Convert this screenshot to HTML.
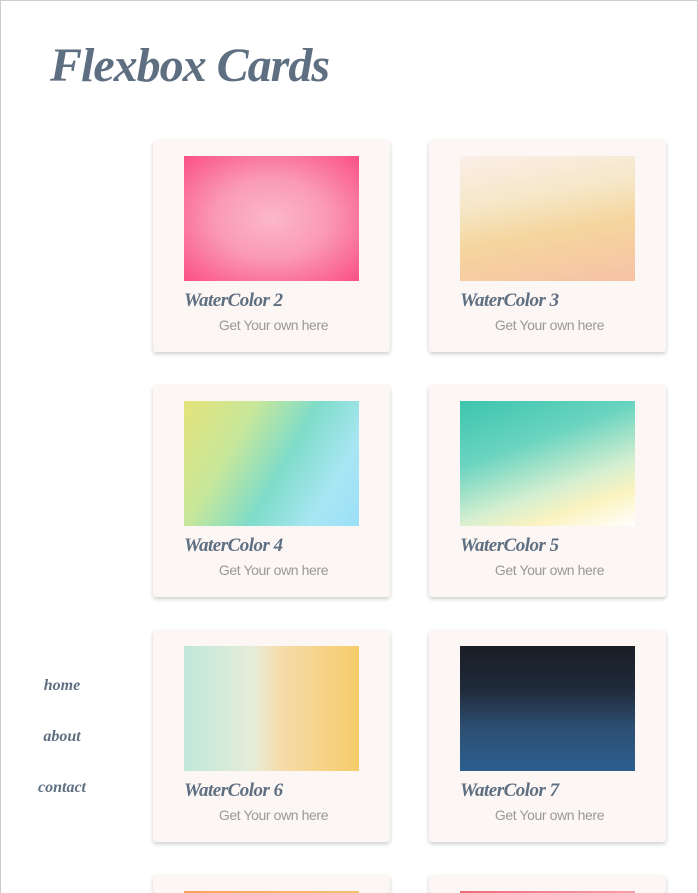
<!DOCTYPE html>
<html style="width:698px;height:893px;overflow:hidden"><head><style>
body{margin:0;width:698px;height:893px;overflow:hidden;background:#fff;font-family:"Liberation Serif",serif;position:relative}
.frame{position:absolute;left:0;top:0;width:696px;height:900px;border:1px solid #ccc;border-bottom:none}
h1{position:absolute;left:50px;top:38px;margin:0;font-size:48px;font-style:italic;font-weight:bold;color:#5f6f82;letter-spacing:-1px}
.nav{position:absolute;left:0;width:124px;text-align:center;font-style:italic;font-weight:bold;color:#5f6f82;font-size:16px}
.card{position:absolute;width:237px;height:212px;background:#fcf7f4;border-radius:3px;box-shadow:0 2px 4px rgba(0,0,0,.2)}
.img{position:absolute;left:31px;top:16px;width:175px;height:125px}
.t{position:absolute;left:31px;top:150px;font-size:19px;font-style:italic;font-weight:bold;color:#5f6f82;letter-spacing:-.5px}
.s{position:absolute;left:0;width:237px;top:177px;text-align:center;font-family:"Liberation Sans",sans-serif;font-size:14px;letter-spacing:-0.4px;color:#999;padding-left:2px}
</style></head><body>
<div class="frame"></div>
<h1>Flexbox Cards</h1>
<div class="nav" style="top:677px">home</div>
<div class="nav" style="top:728px">about</div>
<div class="nav" style="top:779px">contact</div>

<div class="card" style="left:153px;top:140px"><div class="img" style="background:radial-gradient(ellipse at 50% 50%,#fbb7cc 0%,#fa9ab6 45%,#fb4f86 100%)"></div><div class="t">WaterColor 2</div><div class="s">Get Your own here</div></div>
<div class="card" style="left:429px;top:140px"><div class="img" style="background:linear-gradient(170deg,#fbeee8 0%,#f5e7c6 35%,#f5d59d 60%,#f6c2a6 100%)"></div><div class="t">WaterColor 3</div><div class="s">Get Your own here</div></div>

<div class="card" style="left:153px;top:385px"><div class="img" style="background:linear-gradient(120deg,#e4e37a 0%,#c7e79a 30%,#7fdcc9 55%,#a8e6f3 80%,#9bdff8 100%)"></div><div class="t">WaterColor 4</div><div class="s">Get Your own here</div></div>
<div class="card" style="left:429px;top:385px"><div class="img" style="background:linear-gradient(160deg,#3cc5ad 0%,#6ad4c0 35%,#d6efd0 65%,#fbf3c0 80%,#ffffff 100%)"></div><div class="t">WaterColor 5</div><div class="s">Get Your own here</div></div>

<div class="card" style="left:153px;top:630px"><div class="img" style="background:linear-gradient(90deg,#bfe8da 0%,#e6ecd8 40%,#f6dcab 55%,#f6cc6a 100%)"></div><div class="t">WaterColor 6</div><div class="s">Get Your own here</div></div>
<div class="card" style="left:429px;top:630px"><div class="img" style="background:linear-gradient(180deg,#1a1d26 0%,#1f2a3a 35%,#2d4e72 65%,#2b5f8e 100%)"></div><div class="t">WaterColor 7</div><div class="s">Get Your own here</div></div>

<div class="card" style="left:153px;top:875px;height:18px"><div class="img" style="height:2px;background:linear-gradient(90deg,#f7a35b,#f5c26a)"></div></div>
<div class="card" style="left:429px;top:875px;height:18px"><div class="img" style="height:2px;background:linear-gradient(90deg,#f26a7a,#f5a0a8)"></div></div>
</body></html>
